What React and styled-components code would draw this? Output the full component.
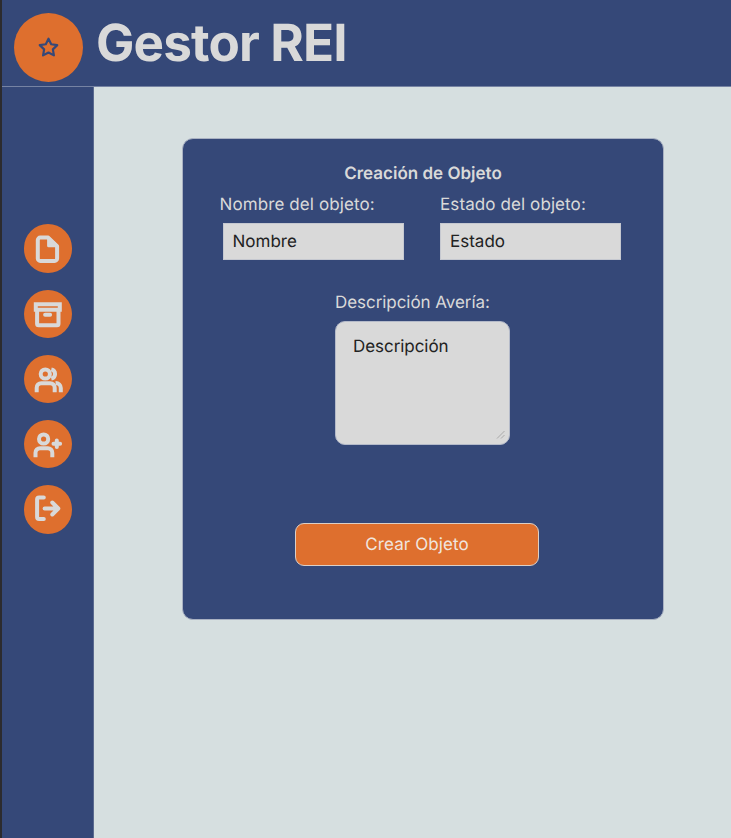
import React from "react";
import styled, { createGlobalStyle } from "styled-components";

const blue = "#354878";
const orange = "#de6f2e";
const light = "#d9d9d9";

const GlobalStyle = createGlobalStyle`
  *, *::before, *::after { box-sizing: border-box; }
  html, body { margin: 0; overflow: hidden; }
  body {
    font-family: Inter, sans-serif;
    color: ${light};
    background: #d6dfe0;
    text-rendering: geometricPrecision;
  }
  input, textarea, button { text-rendering: inherit; }
`;

const Page = styled.div`
  height: 838px;
  display: grid;
  grid-template: 87px 1fr / 92px 1fr;
  border-left: 2px solid #2c2b2e;
`;

const Header = styled.header`
  grid-column: 1 / -1;
  display: flex;
  align-items: flex-start;
  gap: 13px;
  padding: 13px 0 0 12px;
  background: ${blue};
  border-bottom: 1px solid #7683a3;
`;

const Logo = styled.div`
  width: 69px;
  height: 69px;
  border-radius: 50%;
  background: ${orange};
  display: grid;
  place-items: center;
`;

const Title = styled.h1`
  margin: 0;
  font-size: 51.2px;
  line-height: 60px;
  font-weight: 700;
  letter-spacing: -0.85px;
`;

const Sidebar = styled.nav`
  display: flex;
  flex-direction: column;
  align-items: center;
  gap: 17.2px;
  padding: 137.4px 0 0 1.6px;
  background: ${blue};
  border-right: 1px solid #5b6a8f;
`;

const NavButton = styled.button`
  width: 48.4px;
  height: 48.4px;
  margin-bottom: -0.4px;
  padding: 0;
  border: 0;
  border-radius: 50%;
  background: ${orange};
  color: ${light};
`;

const Icon = styled.svg`
  display: block;
  fill: none;
  stroke: currentColor;
  stroke-linecap: round;
  stroke-linejoin: round;
`;

const Main = styled.main`
  padding: 51px 0 0 88px;
`;

const Card = styled.form`
  width: 482px;
  height: 482px;
  padding-top: 23px;
  display: flex;
  flex-direction: column;
  background: ${blue};
  border: 1px solid #a9b1c2;
  border-radius: 11px;
`;

const CardTitle = styled.h2`
  margin: 0;
  text-align: center;
  font-size: 17px;
  line-height: 24px;
  font-weight: 600;
`;

const Fields = styled.div`
  display: grid;
  grid-template-columns: 220.5px 221px;
  padding: 7px 0 0 36.5px;
`;

const Field = styled.div`
  display: flex;
  flex-direction: column;
  align-items: flex-start;
`;

const Label = styled.label`
  font-size: 17px;
  line-height: 24px;
  font-weight: 400;
  letter-spacing: ${(p) => p.$tracking || "0.1px"};
  white-space: nowrap;
`;

const Input = styled.input`
  width: 181px;
  height: 37px;
  margin: 6px 0 0 ${(p) => p.$inset || 0}px;
  padding: 1px 9px 0;
  border: 1px solid #c5c8d0;
  border-radius: 0;
  background: ${light};
  font: 17px Inter, sans-serif;
  outline: 0;
  &::placeholder { color: #222; opacity: 1; }
`;

const Description = styled(Field)`
  margin: 31px 0 0 152px;
`;

const AreaFrame = styled.div`
  position: relative;
  margin-top: 6px;
`;

const Grip = styled.svg`
  position: absolute;
  right: 5px;
  bottom: 6px;
  fill: none;
  stroke: #a9a9a9;
  pointer-events: none;
`;

const TextArea = styled.textarea`
  display: block;
  width: 175px;
  height: 124px;
  margin: 0;
  padding: 13px 17px;
  border: 1px solid #b4bac9;
  border-radius: 10px;
  background: ${light};
  font: 17px/24px Inter, sans-serif;
  letter-spacing: -0.05px;
  outline: 0;
  resize: none;
  &::placeholder { color: #222; opacity: 1; }
`;

const Submit = styled.button`
  width: 244px;
  height: 43px;
  margin: 78px 0 0 112px;
  padding: 0;
  border: 1px solid #dccfc6;
  border-radius: 9px;
  background: ${orange};
  color: #f0e5de;
  font: 17px Inter, sans-serif;
  letter-spacing: 0.08px;
`;

const icons = [
  {
    name: "Documento",
    art: (
      <>
        <path d="M24.2 12.6H16.3a2.5 2.5 0 0 0-2.5 2.5v18.3a2.5 2.5 0 0 0 2.5 2.5h14.3a2.5 2.5 0 0 0 2.5-2.5V21.2z" />
        <path d="M24.6 13v7.7h8z" fill="currentColor" strokeWidth="3" />
      </>
    ),
  },
  {
    name: "Archivo",
    art: (
      <g strokeLinejoin="miter">
        <path d="M11.8 14.2h24v5.6h-24z" />
        <path d="M13.1 20v13.8a1.5 1.5 0 0 0 1.5 1.5H33a1.5 1.5 0 0 0 1.5-1.5V20M21.1 24.7h5" />
      </g>
    ),
  },
  {
    name: "Usuarios",
    art: (
      <g strokeLinecap="butt">
        <circle cx="21.3" cy="19" r="4.6" />
        <path d="M12.7 37.2v-4.5a4.5 4.5 0 0 1 4.5-4.5h9a4.5 4.5 0 0 1 4.5 4.5v4.5" />
        <path d="M27.3 14.4a4.7 4.7 0 0 1 0 9.2M31.6 28a5 5 0 0 1 5.2 5v4.2" />
      </g>
    ),
  },
  {
    name: "Agregar usuario",
    art: (
      <>
        <circle cx="19.6" cy="19" r="4.6" />
        <path d="M11.5 37.3v-4.6a4.5 4.5 0 0 1 4.5-4.5h7.8a4.5 4.5 0 0 1 4.5 4.5v4.6" strokeLinecap="butt" />
        <path d="M32.8 20.5v6.6M29.5 23.8h6.6" />
      </>
    ),
  },
  {
    name: "Salir",
    art: (
      <path d="M19.8 12.6h-4.7a2 2 0 0 0-2 2v17.5a2 2 0 0 0 2 2h4.7M20.6 23.5h13M28.3 17.5l6 6-6 6" />
    ),
  },
];

export default function App() {
  return (
    <>
      <GlobalStyle />
      <Page>
        <Header>
          <Logo>
            <Icon width="21" height="21" viewBox="0 0 24 24" strokeWidth="2.5" color={blue}>
              <path d="m12 2 3.09 6.26L22 9.27l-5 4.87 1.18 6.88L12 17.77l-6.18 3.25L7 14.14 2 9.27l6.91-1.01z" />
            </Icon>
          </Logo>
          <Title>Gestor REI</Title>
        </Header>
        <Sidebar>
          {icons.map((icon) => (
            <NavButton key={icon.name} aria-label={icon.name}>
              <Icon width="48" height="48" viewBox="0 0 48 48" strokeWidth="4">
                {icon.art}
              </Icon>
            </NavButton>
          ))}
        </Sidebar>
        <Main>
          <Card>
            <CardTitle>Creación de Objeto</CardTitle>
            <Fields>
              <Field>
                <Label htmlFor="nombre">Nombre del objeto:</Label>
                <Input id="nombre" placeholder="Nombre" $inset={3} />
              </Field>
              <Field>
                <Label htmlFor="estado">Estado del objeto:</Label>
                <Input id="estado" placeholder="Estado" />
              </Field>
            </Fields>
            <Description>
              <Label htmlFor="descripcion" $tracking="-0.05px">Descripción Avería:</Label>
              <AreaFrame>
                <TextArea id="descripcion" placeholder="Descripción" />
                <Grip width="9" height="9" viewBox="0 0 9 9">
                  <path d="M1 8.5 8.5 1M5 8.5 8.5 5" />
                </Grip>
              </AreaFrame>
            </Description>
            <Submit type="button">Crear Objeto</Submit>
          </Card>
        </Main>
      </Page>
    </>
  );
}
